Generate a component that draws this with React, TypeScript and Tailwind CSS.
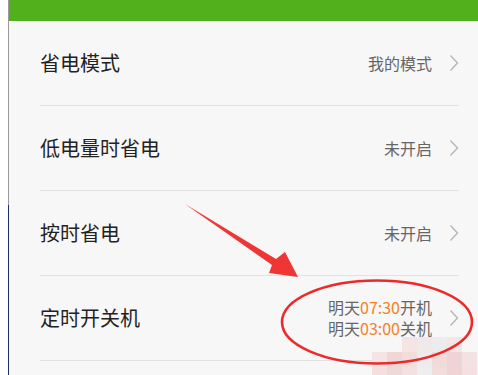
import type { ReactNode } from "react"

function Chevron() {
  return (
    <svg width="10" height="18" viewBox="0 0 10 18" className="shrink-0">
      <polyline points="1.5,1.5 8.5,9 1.5,16.5" fill="none" stroke="#b4b4b4" strokeWidth="1.3" />
    </svg>
  )
}

function Row({ title, value, last }: { title: string; value: ReactNode; last?: boolean }) {
  return (
    <div className={`ml-[31px] mr-[19px] flex h-[85px] items-center justify-between border-b border-[#e2e2e2] ${last ? "" : ""}`}>
      <span className="text-[20px] leading-none text-[#222222]">{title}</span>
      <div className="flex items-center gap-[17px]">
        <div className="text-right text-[16px] leading-[21px] text-[#666666]">{value}</div>
        <Chevron />
      </div>
    </div>
  )
}

const mosaic: { x: number; y: number; c: string }[] = [
  { x: 402, y: 337, c: "#f4e4e4" },
  { x: 417, y: 337, c: "#efe9e9" },
  { x: 432, y: 337, c: "#ececec" },
  { x: 447, y: 337, c: "#f3e6e6" },
  { x: 372, y: 352, c: "#f6e3e3" },
  { x: 387, y: 352, c: "#f0d6d6" },
  { x: 402, y: 352, c: "#f2dcdc" },
  { x: 417, y: 352, c: "#ececec" },
  { x: 432, y: 352, c: "#f1dada" },
  { x: 447, y: 352, c: "#eed4d4" },
  { x: 462, y: 352, c: "#f4e2e2" },
  { x: 372, y: 367, c: "#f5dede" },
  { x: 387, y: 367, c: "#f0d8d8" },
  { x: 402, y: 367, c: "#f3e0e0" },
  { x: 417, y: 367, c: "#eeeeee" },
  { x: 432, y: 367, c: "#f2dcdc" },
  { x: 447, y: 367, c: "#f0d4d4" },
  { x: 462, y: 367, c: "#f4e0e0" },
]

export default function App() {
  return (
    <div
      className="relative flex h-[375px] w-[478px] overflow-hidden bg-white"
      style={{ fontFamily: '"Noto Sans CJK SC", "Noto Sans", sans-serif' }}
    >
      <div className="w-2 shrink-0 bg-white" />
      <div className="flex w-px shrink-0 flex-col">
        <div className="h-[205px] bg-[#9a9a9a]" />
        <div className="flex-1 bg-[#1c2e6e]" />
      </div>
      <div className="flex flex-1 flex-col bg-[#f7f7f7]">
        <div className="h-[21px] shrink-0 bg-[#51b01b]" />
        <Row title="省电模式" value="我的模式" />
        <Row title="低电量时省电" value="未开启" />
        <Row title="按时省电" value="未开启" />
        <Row
          title="定时开关机"
          value={
            <>
              <div>
                明天<span className="text-[#f5801f]">07:30</span>开机
              </div>
              <div>
                明天<span className="text-[#f5801f]">03:00</span>关机
              </div>
            </>
          }
        />
      </div>

      {mosaic.map((m) => (
        <div
          key={`${m.x}-${m.y}`}
          className="absolute h-[15px] w-[15px]"
          style={{ left: m.x, top: m.y, backgroundColor: m.c }}
        />
      ))}

      <svg className="pointer-events-none absolute left-0 top-0" width="478" height="375" viewBox="0 0 478 375">
        <polygon
          points="185,204 276,259 285,252 298,277 269,273 272,265"
          fill="#f03535"
        />
        <ellipse cx="377" cy="322" rx="95" ry="41.5" fill="none" stroke="#ec2a2a" strokeWidth="2.6" />
      </svg>
    </div>
  )
}
